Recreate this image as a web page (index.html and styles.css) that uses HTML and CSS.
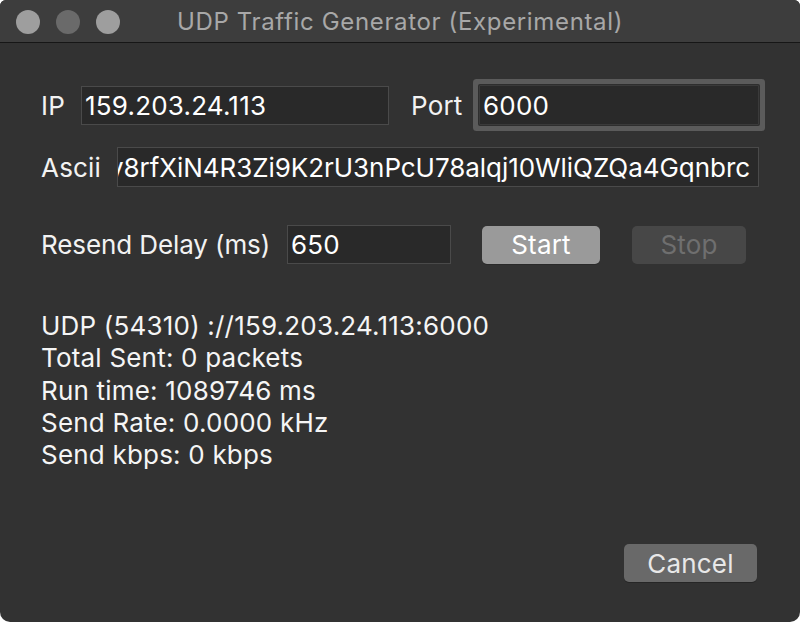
FILE: index.html
```html
<!DOCTYPE html>
<html>
<head>
<meta charset="utf-8">
<link rel="stylesheet" href="styles.css">
</head>
<body>
<div class="window">
  <div class="titlebar">
    <div class="lights">
      <span class="light"></span>
      <span class="light mid"></span>
      <span class="light"></span>
    </div>
    <div class="title">UDP Traffic Generator (Experimental)</div>
    <div class="spacer"></div>
  </div>
  <div class="content">
    <div class="row row-ip">
      <span class="lbl lbl-ip">IP</span>
      <div class="field field-ip">159.203.24.113</div>
      <span class="lbl lbl-port">Port</span>
      <div class="field field-port">6000</div>
    </div>
    <div class="row row-ascii">
      <span class="lbl lbl-ascii">Ascii</span>
      <div class="field field-ascii"><span class="scroll">Jv8rfXiN4R3Zi9K2rU3nPcU78alqj10WliQZQa4Gqnbrc</span></div>
    </div>
    <div class="row row-delay">
      <span class="lbl lbl-delay">Resend Delay (ms)</span>
      <div class="field field-delay">650</div>
      <button class="btn btn-start">Start</button>
      <button class="btn btn-stop">Stop</button>
    </div>
    <div class="stats">
      <div>UDP (54310) ://159.203.24.113:6000</div>
      <div>Total Sent: 0 packets</div>
      <div>Run time: 1089746 ms</div>
      <div>Send Rate: 0.0000 kHz</div>
      <div>Send kbps: 0 kbps</div>
    </div>
    <div class="footer">
      <button class="btn btn-cancel">Cancel</button>
    </div>
  </div>
</div>
</body>
</html>
```
FILE: styles.css
```css
html, body {
  margin: 0;
  padding: 0;
  background: #ffffff;
}
body {
  width: 800px;
  height: 622px;
  overflow: hidden;
}
.window {
  width: 800px;
  height: 622px;
  background: #323232;
  border-radius: 6px 6px 10px 10px;
  overflow: hidden;
  font-family: Inter, "Noto Sans", sans-serif;
  color: #f2f2f2;
  box-sizing: border-box;
}
.titlebar {
  height: 42px;
  background: #3d3d3d;
  border-top: 1px solid #555555;
  border-bottom: 1px solid #161616;
  box-sizing: content-box;
  display: grid;
  grid-template-columns: 1fr auto 1fr;
  align-items: center;
  margin-top: -1px;
}
.lights {
  display: flex;
  gap: 16px;
  padding-left: 16px;
  padding-top: 2px;
}
.light {
  width: 24px;
  height: 24px;
  border-radius: 50%;
  background: #9e9e9e;
}
.light.mid {
  background: #6a6a6a;
}
.title {
  font-size: 24px;
  color: #a8a8a8;
  letter-spacing: 0.65px;
  padding-top: 1px;
}
.content {
  padding: 42px 41px 0 41px;
}
.row {
  display: flex;
  align-items: center;
}
.lbl {
  font-size: 26px;
  letter-spacing: 0.2px;
}
.field {
  box-sizing: border-box;
  background: #292929;
  border: 1px solid #4a4a4a;
  font-size: 26px;
  letter-spacing: 0.2px;
  color: #ffffff;
  padding: 0 3px;
  display: flex;
  align-items: center;
  white-space: nowrap;
  overflow: hidden;
}
.row-ip {
  height: 40px;
}
.lbl-ip {
  width: 40px;
}
.field-ip {
  width: 308px;
  height: 39px;
}
.lbl-port {
  margin-left: 22px;
  width: 68px;
}
.field-port {
  width: 280px;
  height: 40px;
  border-color: #3a3a3a;
  border-radius: 1px;
  box-shadow: 0 0 0 1px #2e2e2e, 0 0 0 6px #5b5b5b;
}
.row-ascii {
  margin-top: 22px;
  height: 40px;
}
.lbl-ascii {
  width: 76px;
}
.field-ascii {
  width: 642px;
  height: 40px;
  justify-content: flex-end;
  padding-right: 8px;
  letter-spacing: -0.05px;
}
.scroll {
  flex-shrink: 0;
}
.row-delay {
  margin-top: 38px;
  height: 39px;
}
.lbl-delay {
  width: 246px;
  letter-spacing: -0.1px;
}
.field-delay {
  width: 164px;
  height: 39px;
}
.btn {
  box-sizing: border-box;
  border: none;
  border-radius: 5px;
  font-family: Inter, "Noto Sans", sans-serif;
  font-size: 26px;
  letter-spacing: 0.2px;
  height: 38px;
  padding: 0;
  display: flex;
  align-items: center;
  justify-content: center;
}
.btn-start {
  margin-left: 31px;
  width: 118px;
  background: #9a9a9a;
  color: #ffffff;
  box-shadow: 0 1px 0 #2a2a2a;
}
.btn-stop {
  margin-left: 32px;
  width: 114px;
  background: #474747;
  color: #6f6f6f;
}
.stats {
  margin-top: 46px;
  font-size: 26px;
  letter-spacing: 0.2px;
  line-height: 32.3px;
  color: #f5f5f5;
}
.footer {
  display: flex;
  justify-content: flex-end;
  padding-right: 2px;
  margin-top: 73px;
}
.btn-cancel {
  width: 133px;
  background: #696969;
  color: #e8e8e8;
  box-shadow: 0 1px 0 #262626;
}
```
